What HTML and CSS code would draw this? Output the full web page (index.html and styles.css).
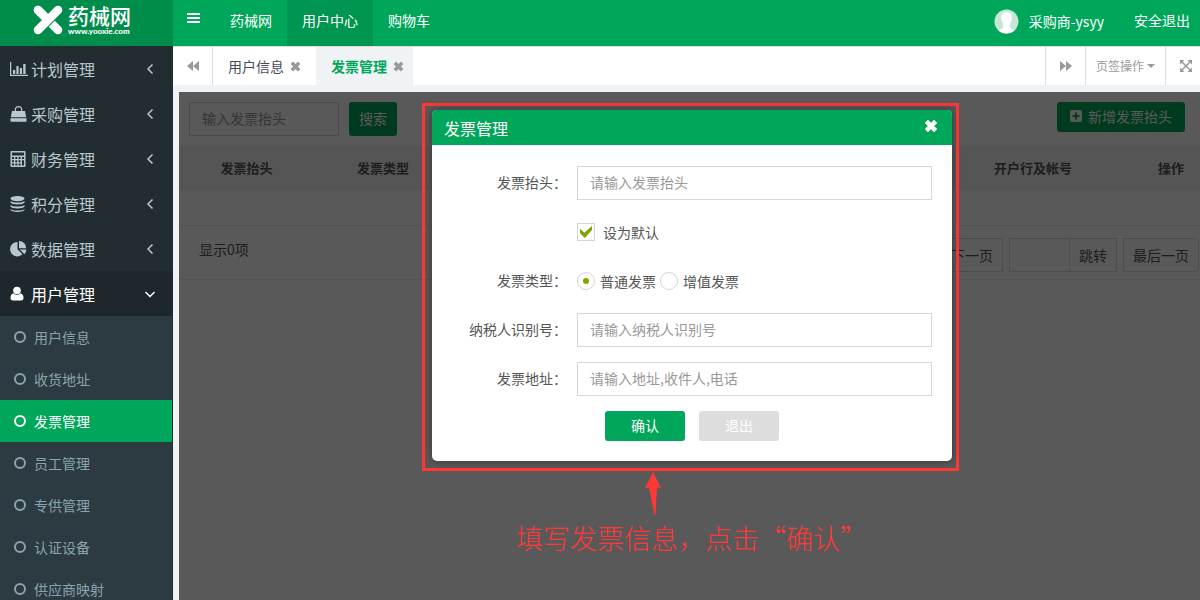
FILE: index.html
```html
<!DOCTYPE html>
<html lang="zh-CN">
<head>
<meta charset="utf-8">
<title>发票管理</title>
<link rel="stylesheet" href="styles.css">
</head>
<body>
<svg class="defs" aria-hidden="true">
  <symbol id="times" viewBox="0 0 12 12"><path d="M2 2l8 8M10 2L2 10" stroke="currentColor" stroke-width="3.800" fill="none"/></symbol>
  <symbol id="left" viewBox="0 0 10 10"><path d="M7.500 0.500L3 5l4.500 4.500" stroke="currentColor" stroke-width="1.500" fill="none"/></symbol>
</svg>
<div class="app">
  <aside class="sidebar">
    <a class="logo" href="#">
      <svg class="logo-mark" viewBox="0 0 30 30"><path d="M5 5L25 25" stroke="#fff" stroke-width="8.500" stroke-linecap="round"/><path d="M20 10L10 20" stroke="#008d4c" stroke-width="10.500"/><path d="M25 5L5 25" stroke="#fff" stroke-width="8.500" stroke-linecap="round"/><path d="M5 5l8 8" stroke="#fff" stroke-width="8.500" stroke-linecap="round"/></svg>
      <span class="logo-text"><b>药械网</b><small>www.yooxie.com</small></span>
    </a>
    <nav class="menu">
      <a class="item" href="#"><svg class="mi" viewBox="0 0 18 16"><path d="M.6 1v13.4H18" fill="none" stroke="currentColor" stroke-width="1.3"/><path d="M3 9h2.2v4H3zM6.4 5h2.2v8H6.4zM9.8 7H12v6H9.800zM13.200 3h2.400v10h-2.400z" fill="currentColor"/></svg><span>计划管理</span><svg class="ar"><use href="#left"/></svg></a>
      <a class="item" href="#"><svg class="mi" viewBox="0 0 18 16"><path d="M2 5h13l1.200 6.300H.8zM.5 12.300h16v2.700a.8.8 0 0 1-.8.8H1.300a.8.8 0 0 1-.8-.8z" fill="currentColor"/><path d="M5.300 7V3.800a3.200 3.200 0 0 1 6.400 0V7" fill="none" stroke="currentColor" stroke-width="1.200"/></svg><span>采购管理</span><svg class="ar"><use href="#left"/></svg></a>
      <a class="item" href="#"><svg class="mi" viewBox="0 0 18 16"><path fill="currentColor" fill-rule="evenodd" d="M1.500 0h13q1 0 1 1v14q0 1-1 1h-13q-1 0-1-1V1q0-1 1-1zM2 1.500v3h12v-3zM2 6v2h2V6zm3.300 0v2h2V6zm3.300 0v2h2V6zM12 6v2h2V6zM2 9.200v2h2v-2zm3.300 0v2h2v-2zm3.300 0v2h2v-2zM2 12.500v2h2v-2zm3.300 0v2h2v-2zm3.300 0v2h2v-2zM12 9.200v5.300h2V9.200z"/></svg><span>财务管理</span><svg class="ar"><use href="#left"/></svg></a>
      <a class="item" href="#"><svg class="mi" viewBox="0 0 18 16"><g fill="currentColor"><ellipse cx="7.500" cy="2.600" rx="7" ry="2.600"/><path d="M.5 5c2.500 2 11.500 2 14 0v1.600c-1 2.600-13 2.600-14 0zM.5 9c2.500 2 11.500 2 14 0v1.600c-1 2.600-13 2.600-14 0zM.5 13c2.500 2 11.500 2 14 0v.8c-1 2.900-13 2.900-14 0z"/></g></svg><span>积分管理</span><svg class="ar"><use href="#left"/></svg></a>
      <a class="item" href="#"><svg class="mi" viewBox="0 0 18 16"><path fill="currentColor" d="M7.500 1v7.200l5 5A7.200 7.200 0 1 1 7.500 1zM9 0a7.200 7.200 0 0 1 7.200 7.200H9zM9.800 8.600h6.600a7 7 0 0 1-2 4.600z"/></svg><span>数据管理</span><svg class="ar"><use href="#left"/></svg></a>
      <a class="item open" href="#"><svg class="mi" viewBox="0 0 18 16"><circle cx="7" cy="4.500" r="3.800" fill="currentColor"/><path fill="currentColor" d="M3.500 7.300c2 2.300 5 2.300 7 0 2.200.5 3 2.500 3 4.700 0 1.600-.8 2.500-2.500 2.500H3C1.300 14.500.5 13.600.5 12c0-2.200.8-4.200 3-4.700z"/></svg><span>用户管理</span><svg class="ar" viewBox="0 0 10 10"><path d="M.5 3L5 7.500 9.500 3" stroke="currentColor" stroke-width="1.500" fill="none"/></svg></a>
      <div class="sub">
        <a href="#">用户信息</a>
        <a href="#">收货地址</a>
        <a class="on" href="#">发票管理</a>
        <a href="#">员工管理</a>
        <a href="#">专供管理</a>
        <a href="#">认证设备</a>
        <a href="#">供应商映射</a>
      </div>
    </nav>
  </aside>
  <div class="main">
    <header class="top">
      <button class="burger" aria-label="菜单"><svg viewBox="0 0 14 12"><path d="M0 2h13M0 6h13M0 10h13" stroke="#fff" stroke-width="2"/></svg></button>
      <a href="#">药械网</a><a class="on" href="#">用户中心</a><a href="#">购物车</a>
      <a class="user" href="#"><svg viewBox="0 0 26 26"><clipPath id="c"><circle cx="13" cy="13" r="12.500"/></clipPath><g clip-path="url(#c)"><path fill="#c5e8d6" d="M0 0h26v26H0z"/><path fill="#fff" d="M13 3c4 0 6 3 5.500 7-.3 3-1.500 4-2 6-.4 3 0 4 3 5l3 1.500V26h-19v-3.500l3-1.500c3-1 3.400-2 3-5-.5-2-1.700-3-2-6C7 6 9 3 13 3z"/></g></svg>采购商-ysyy</a>
      <a class="quit" href="#">安全退出</a>
    </header>
    <div class="tabs">
      <button class="tool prev" aria-label="向左"><svg viewBox="0 0 12 10"><path fill="currentColor" d="M6 0v10L0 5zM12 0v10L6 5z"/></svg></button>
      <a class="tab" href="#">用户信息<svg><use href="#times"/></svg></a>
      <a class="tab on" href="#">发票管理<svg><use href="#times"/></svg></a>
      <button class="tool next" aria-label="向右"><svg viewBox="0 0 12 10"><path fill="currentColor" d="M0 0v10l6-5zM6 0v10l6-5z"/></svg></button>
      <button class="tool ops">页签操作<i class="caret"></i></button>
      <button class="tool full" aria-label="全屏"><svg viewBox="0 0 12 12"><path fill="currentColor" d="M0 0h4.500L0 4.500zM12 0v4.500L7.500 0zM0 12V7.500L4.500 12zM12 12H7.500L12 7.500z"/><path d="M2 2l8 8M10 2l-8 8" stroke="currentColor" stroke-width="1.500"/></svg></button>
    </div>
    <main class="frame">
      <div class="filters">
        <input class="field search" type="text" placeholder="输入发票抬头" aria-label="输入发票抬头">
        <button class="btn find">搜索</button>
        <button class="btn add"><svg viewBox="0 0 12 12"><path fill="currentColor" fill-rule="evenodd" d="M2 0h8q2 0 2 2v8q0 2-2 2H2q-2 0-2-2V2q0-2 2-2zm3 2.500V5H2.500v2H5v2.500h2V7h2.500V5H7V2.500z"/></svg>新增发票抬头</button>
      </div>
      <table class="list">
        <colgroup><col class="c1"><col class="c2"><col><col class="c4"><col class="c5"></colgroup>
        <thead><tr><th>发票抬头</th><th>发票类型</th><th></th><th>开户行及帐号</th><th>操作</th></tr></thead>
        <tbody><tr><td colspan="5"></td></tr></tbody>
      </table>
      <div class="pager">
        <span class="count">显示0项</span>
        <button class="pg">下一页</button>
        <div class="jump"><input type="text" aria-label="页码"><button class="pg">跳转</button></div>
        <button class="pg last">最后一页</button>
      </div>
      <div class="overlay">
        <div class="callout">
          <form class="modal" role="dialog" aria-labelledby="mt">
            <div class="modal-head"><span id="mt">发票管理</span><button type="button" class="close" aria-label="关闭"><svg><use href="#times"/></svg></button></div>
            <div class="modal-body">
              <div class="row"><label class="lb" for="f1">发票抬头<i>：</i></label><input class="field" id="f1" type="text" placeholder="请输入发票抬头"></div>
              <div class="row"><span class="lb"></span><label class="choice def"><input type="checkbox" checked>设为默认</label></div>
              <div class="row"><span class="lb">发票类型<i>：</i></span><label class="choice"><input type="radio" name="t" checked>普通发票</label><label class="choice"><input type="radio" name="t">增值发票</label></div>
              <div class="row"><label class="lb" for="f2">纳税人识别号<i>：</i></label><input class="field" id="f2" type="text" placeholder="请输入纳税人识别号"></div>
              <div class="row"><label class="lb" for="f3">发票地址<i>：</i></label><input class="field" id="f3" type="text" placeholder="请输入地址,收件人,电话"></div>
              <div class="actions"><button type="button" class="btn">确认</button><button type="button" class="btn gray">退出</button></div>
            </div>
          </form>
          <div class="note">
            <svg viewBox="0 0 16 44"><path fill="#ff3737" d="M8 0l8 16-4-.5L10.500 43h-1L4 16H0z"/></svg>
            <p>填写发票信息，点击“确认”</p>
          </div>
        </div>
      </div>
    </main>
  </div>
</div>
</body>
</html>
```
FILE: styles.css
```css
* { box-sizing: border-box; }
body {
  margin: 0;
  font: 14px/20px "Noto Sans CJK SC", sans-serif;
  color: #555;
  background: #eff3f5;
  overflow: hidden;
}
a { color: inherit; text-decoration: none; }
button, input { font: inherit; color: inherit; margin: 0; }
button { border: 0; background: none; padding: 0; cursor: pointer; }
svg { flex: none; display: block; }
.defs { position: absolute; width: 0; height: 0; }
.app { display: flex; height: 100vh; }

.sidebar { width: 173px; flex: none; background: #222d32; overflow: hidden; }
.logo {
  display: flex;
  gap: 5px;
  height: 46px;
  padding: 5px 0 0 33px;
  background: #008d4c;
  color: #fff;
}
.logo-mark { width: 30px; height: 30px; }
.logo-text { display: flex; flex-direction: column; gap: 1px; }
.logo-text b { font-size: 21px; line-height: 20px; font-weight: 500; }
.logo-text small { font: 900 8px/10px Lato, sans-serif; }
.item {
  display: flex;
  align-items: center;
  height: 45px;
  padding: 0 18px 0 10px;
  font-size: 16px;
  color: #b8c7ce;
}
.item span { flex: 1; }
.item.open { background: #1e282c; color: #fff; }
.mi { width: 18px; height: 16px; margin-right: 3px; }
.ar { width: 10px; height: 10px; }
.sub { margin-right: 1px; background: #2c3b41; }
.sub a {
  display: flex;
  align-items: center;
  gap: 8px;
  height: 42px;
  padding-left: 14px;
  color: #8aa4af;
}
.sub a::before {
  content: "";
  box-sizing: border-box;
  width: 12px;
  height: 12px;
  border: 2px solid currentColor;
  border-radius: 50%;
}
.sub a.on { background: #00a65a; color: #fff; }

.main { flex: 1; min-width: 0; display: flex; flex-direction: column; }
.top {
  display: flex;
  flex: none;
  height: 46px;
  background: #00a65a;
  color: #fff;
  line-height: 40px;
}
.top a { padding: 0 15px; white-space: nowrap; }
.top a.on { background: #009551; }
.burger { width: 42px; padding: 0 14px 10px; }
.burger svg { width: 14px; height: 12px; }
.top .user { display: flex; align-items: center; gap: 10px; margin-left: auto; padding-bottom: 4px; }
.user svg { width: 25px; height: 25px; }
.top .quit { padding-right: 10px; }

.tabs {
  display: flex;
  flex: none;
  height: 39px;
  background: #fff;
  border-top: 1px solid #ddd;
  overflow: hidden;
}
.tab { display: flex; align-items: center; gap: 6px; padding: 0 15px; color: #444b59; }
.tab svg { width: 11px; height: 11px; color: #999; }
.tab.on { background: #eff3f5; color: #00a65a; font-weight: bold; padding-right: 9px; }
.tool { display: flex; align-items: center; justify-content: center; flex: none; width: 40px; color: #999; border-left: 1px solid #ddd; }
.tool svg { width: 12px; height: 10px; }
.prev { border-left: 0; border-right: 1px solid #ddd; }
.next { margin-left: auto; }
.ops { width: 80px; gap: 3px; font-size: 12px; }
.caret { border: 4px solid transparent; border-top-color: #999; border-bottom: 0; }
.full { width: 35px; padding-left: 5px; }
.full svg { height: 12px; }

.frame { position: relative; flex: 1; margin: 7px 0 0 6px; background: #fff; overflow: hidden; }
.filters { display: flex; align-items: flex-start; gap: 10px; padding: 10px 15px 10px 10px; }
.field {
  height: 34px;
  flex: 1;
  min-width: 0;
  padding: 0 12px 2px;
  border: 1px solid #d2d6de;
  border-radius: 0;
  background: #fff;
}
.field::placeholder { color: #999; opacity: 1; }
.field.search { flex: none; width: 150px; }
.btn { display: flex; align-items: center; justify-content: center; padding-bottom: 2px; border-radius: 3px; background: #00a65a; color: #fff; }
.find { width: 48px; height: 34px; }
.add { width: 128px; height: 30px; gap: 6px; margin-left: auto; }
.add svg { width: 12px; height: 12px; }
.list { width: 100%; table-layout: fixed; border-collapse: collapse; font-size: 13px; }
.c1 { width: 135px; }
.c2 { width: 138px; }
.c4 { width: 218px; }
.c5 { width: 58px; }
.list th { height: 44px; padding: 0; background: #f3f4f5; }
.list td { height: 35px; padding: 0; border-bottom: 1px solid #eee; }
.pager { display: flex; align-items: center; gap: 6px; height: 54px; padding: 6px 1px 0 20px; border-bottom: 1px solid #eee; }
.count { margin-right: auto; padding-bottom: 12px; }
.pg { height: 34px; padding: 0 9px; border: 1px solid #ddd; white-space: nowrap; }
.last { border-radius: 0 4px 4px 0; }
.jump { display: flex; }
.jump input { width: 60px; height: 34px; border: 1px solid #ddd; border-right: 0; }

.overlay {
  position: absolute;
  inset: 0;
  display: flex;
  justify-content: center;
  align-items: flex-start;
  padding: 11px 0 0 2px;
  background: rgba(0, 0, 0, .65);
}
.callout { position: relative; border: 3px solid #ff3737; padding: 4px 4px 7px 7px; }
.modal { width: 520px; border-radius: 5px; background: #fff; overflow: hidden; box-shadow: 0 0 8px rgba(0, 0, 0, .4); }
.modal-head {
  display: flex;
  align-items: center;
  justify-content: space-between;
  height: 35px;
  padding: 0 14px 0 12px;
  background: #00a65a;
  color: #fff;
  font-size: 16px;
}
.close { padding-bottom: 4px; }
.close svg { width: 14px; height: 14px; }
.modal-body { display: grid; gap: 15px; padding: 21px 20px 20px; }
.row { display: flex; align-items: center; height: 34px; }
.lb { width: 115px; margin-right: 10px; padding-bottom: 2px; text-align: right; white-space: nowrap; }
.lb i { font-family: "Noto Sans CJK TC", sans-serif; font-style: normal; }
.choice { display: flex; align-items: center; gap: 5px; margin-right: 4px; }
.choice.def { gap: 8px; }
.choice input {
  appearance: none;
  display: grid;
  place-items: center;
  width: 18px;
  height: 18px;
  border: 1px solid #d5d5d5;
  background: #fff;
}
.choice input[type="radio"] { border-radius: 50%; }
.choice input[type="radio"]:checked::after { content: ""; width: 6px; height: 6px; border-radius: 50%; background: #7ba600; }
.choice input[type="checkbox"]:checked::after {
  content: "";
  width: 12px;
  height: 12px;
  background: #7ba600;
  clip-path: polygon(0 22%, 36% 56%, 100% 0, 100% 34%, 40% 100%, 0 60%);
}
.actions { display: flex; justify-content: center; gap: 14px; }
.actions .btn { width: 80px; height: 30px; }
.actions .gray { background: #ddd; }
.note { position: absolute; top: 100%; left: 91px; color: #ff3737; white-space: nowrap; }
.note svg { width: 16px; height: 44px; margin: 4px 0 0 129px; }
.note p { margin: 4px 0 0; font-size: 27px; line-height: 36px; font-weight: 300; }
```
